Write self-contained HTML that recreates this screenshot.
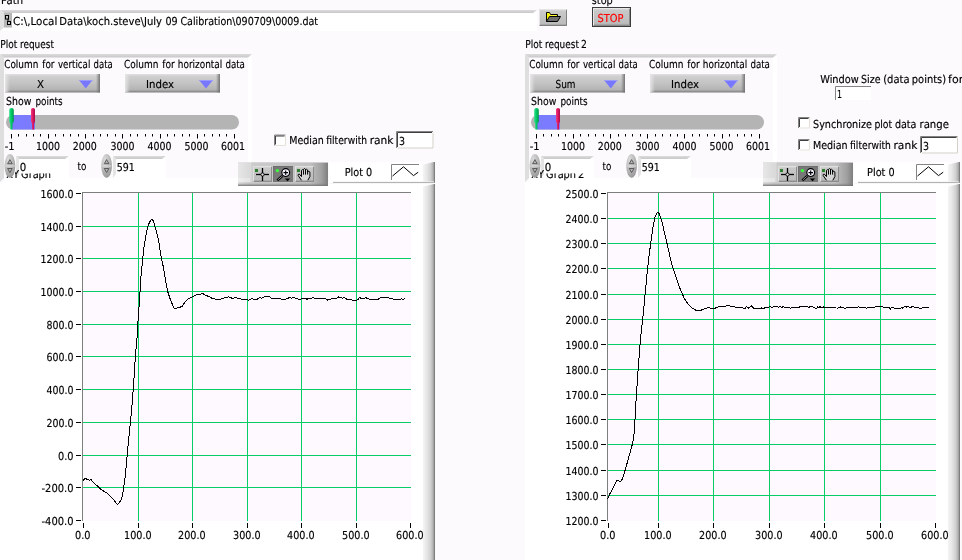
<!DOCTYPE html>
<html lang="en">
<head>
<meta charset="utf-8">
<title>XY Graph viewer</title>
<style>
html,body{margin:0;padding:0;background:#fdfafe;}
body{width:962px;height:560px;overflow:hidden;font-family:"DejaVu Sans Condensed", "Liberation Sans", sans-serif;font-size:11px;}
svg{display:block;position:absolute;left:0;top:0;will-change:transform;}
</style>
</head>
<body>
<svg width="962" height="560" viewBox="0 0 962 560" font-family='"DejaVu Sans Condensed", "Liberation Sans", sans-serif' font-size="11px" text-rendering="geometricPrecision">
<defs>
<linearGradient id="gRing" x1="0" y1="0" x2="0" y2="1">
 <stop offset="0" stop-color="#e2e2e2"/><stop offset="0.12" stop-color="#cfcfcf"/>
 <stop offset="0.5" stop-color="#c3c3c3"/><stop offset="0.85" stop-color="#b4b4b4"/>
 <stop offset="0.93" stop-color="#969696"/><stop offset="1" stop-color="#7c7c7c"/>
</linearGradient>
<linearGradient id="gRingL" x1="0" y1="0" x2="1" y2="0">
 <stop offset="0" stop-color="#e6e6e6" stop-opacity="0.95"/><stop offset="1" stop-color="#e6e6e6" stop-opacity="0"/>
</linearGradient>
<linearGradient id="gRingR" x1="0" y1="0" x2="1" y2="0">
 <stop offset="0" stop-color="#707070" stop-opacity="0"/><stop offset="1" stop-color="#707070" stop-opacity="0.95"/>
</linearGradient>
<linearGradient id="gEdge" x1="0" y1="0" x2="1" y2="0">
 <stop offset="0" stop-color="#ffffff"/><stop offset="0.09" stop-color="#fdfdfd"/><stop offset="0.1" stop-color="#f3f3f3"/><stop offset="0.35" stop-color="#e8e8e8"/><stop offset="0.65" stop-color="#d2d2d2"/>
 <stop offset="0.84" stop-color="#b4b4b4"/><stop offset="0.92" stop-color="#989898"/><stop offset="0.97" stop-color="#7a7a7a"/><stop offset="1" stop-color="#6e6e6e"/>
</linearGradient>
<linearGradient id="gPal" x1="0" y1="0" x2="1" y2="0">
 <stop offset="0" stop-color="#dedede"/><stop offset="0.12" stop-color="#cccccc"/>
 <stop offset="0.8" stop-color="#c0c0c0"/><stop offset="0.93" stop-color="#a0a0a0"/><stop offset="1" stop-color="#7e7e7e"/>
</linearGradient>
<linearGradient id="gPalB" x1="0" y1="0" x2="0" y2="1">
 <stop offset="0" stop-color="#808080" stop-opacity="0"/><stop offset="1" stop-color="#707070" stop-opacity="0.9"/>
</linearGradient>
<linearGradient id="gBtn" x1="0" y1="0" x2="0" y2="1">
 <stop offset="0" stop-color="#dcdcdc"/><stop offset="0.15" stop-color="#c8c8c8"/>
 <stop offset="0.85" stop-color="#bcbcbc"/><stop offset="1" stop-color="#8a8a8a"/>
</linearGradient>
<linearGradient id="gGreen" x1="0" y1="0" x2="1" y2="0">
 <stop offset="0" stop-color="#2fe08a"/><stop offset="0.5" stop-color="#00c864"/><stop offset="1" stop-color="#00964a"/>
</linearGradient>
<linearGradient id="gRed" x1="0" y1="0" x2="1" y2="0">
 <stop offset="0" stop-color="#f0407e"/><stop offset="0.5" stop-color="#dc1462"/><stop offset="1" stop-color="#a80c48"/>
</linearGradient>
<radialGradient id="gSpin" cx="0.35" cy="0.25" r="0.8">
 <stop offset="0" stop-color="#dcdcdc"/><stop offset="0.5" stop-color="#bcbcbc"/><stop offset="1" stop-color="#969696"/>
</radialGradient>
<linearGradient id="gTopB" x1="0" y1="0" x2="0" y2="1">
 <stop offset="0" stop-color="#dcdcdc"/><stop offset="1" stop-color="#c8c8c8"/>
</linearGradient>
</defs>
<rect x="0" y="0" width="962" height="560" fill="#fdfafe"/>
<text x="1.0" y="4.0" text-anchor="start" fill="#000" stroke="#000" stroke-width="0.15" textLength="22.0" lengthAdjust="spacingAndGlyphs">Path</text>
<text x="591.8" y="4.0" text-anchor="start" fill="#000" stroke="#000" stroke-width="0.15" textLength="21.0" lengthAdjust="spacingAndGlyphs">stop</text>
<g id="path-control">
<rect x="0" y="10" width="537" height="21" fill="#ffffff"/>
<polygon points="0,10 537,10 533,13 4,13" fill="url(#gTopB)"/>
<polygon points="0,10 4,13 4,27.5 0,31" fill="#e2e2e2"/>
<rect x="4" y="13" width="529" height="14.5" fill="#ffffff"/>
<rect x="4" y="13" width="8" height="14.5" fill="#b6b6b6"/>
<rect x="5.5" y="15.5" width="3" height="3.5" fill="#c8c8c8" stroke="#000" stroke-width="1"/>
<rect x="7.5" y="21.5" width="3" height="3" fill="#c8c8c8" stroke="#000" stroke-width="1"/>
<line x1="8" y1="19" x2="8" y2="21.5" stroke="#000" stroke-width="1"/>
<text y="25.0" fill="#000" stroke="#000" stroke-width="0.15"><tspan x="13.0" textLength="44.3" lengthAdjust="spacingAndGlyphs">C:\,Local</tspan> <tspan x="59.3" textLength="102.7" lengthAdjust="spacingAndGlyphs">Data\koch.steve\July</tspan> <tspan x="165.4" textLength="12.2" lengthAdjust="spacingAndGlyphs">09</tspan> <tspan x="180.4" textLength="137.7" lengthAdjust="spacingAndGlyphs">Calibration\090709\0009.dat</tspan></text>
</g>
<g id="browse-button">
<rect x="539" y="9" width="28" height="17" fill="url(#gBtn)"/>
<path d="M539.5,25.5 L566.5,25.5 L566.5,9.5" fill="none" stroke="#808080" stroke-width="1"/>
<path d="M539.5,25.5 L539.5,9.5 L566.5,9.5" fill="none" stroke="#e4e4e4" stroke-width="1"/>
<path d="M546.5,21.5 L546.5,12.5 L549.5,12.5 L550.5,14.5 L557.5,14.5 L557.5,16.5" fill="#f4f000" stroke="#000" stroke-width="1"/>
<path d="M546.5,21.5 L549.5,16.5 L560.5,16.5 L557.5,21.5 Z" fill="#6e6e6e" stroke="#000" stroke-width="1"/>
<path d="M547.5,13.5 L549,13.5 L550,15.5 L556.5,15.5" fill="none" stroke="#ffff30" stroke-width="1"/>
</g>
<g id="stop-button">
<rect x="592" y="7" width="39" height="20" fill="#3c3c3c"/>
<rect x="593" y="8" width="37" height="18" fill="url(#gBtn)"/>
<path d="M593.5,25.5 L629.5,25.5 L629.5,8.5" fill="none" stroke="#8a8a8a" stroke-width="1"/>
<path d="M593.5,25.5 L593.5,8.5 L629.5,8.5" fill="none" stroke="#e8e8e8" stroke-width="1"/>
<text x="597.5" y="22.0" text-anchor="start" fill="#ff0000" stroke="#ff0000" stroke-width="0.15" textLength="26.0" lengthAdjust="spacingAndGlyphs">STOP</text>
</g>
<g id="xy-graph">
<rect x="0" y="182" width="423" height="378" fill="#ffffff"/>
<rect x="422" y="184" width="13" height="376" fill="url(#gEdge)"/>
<polygon points="422,184 434,184 423,186.8 422,186.8" fill="#ffffff" opacity="0.85"/>
<rect x="83" y="193" width="328" height="328" fill="#fdf9fe"/>
<g stroke="#08cc66" stroke-width="1" shape-rendering="crispEdges">
<line x1="83" y1="226.5" x2="411" y2="226.5"/>
<line x1="83" y1="258.5" x2="411" y2="258.5"/>
<line x1="83" y1="291.5" x2="411" y2="291.5"/>
<line x1="83" y1="324.5" x2="411" y2="324.5"/>
<line x1="83" y1="356.5" x2="411" y2="356.5"/>
<line x1="83" y1="389.5" x2="411" y2="389.5"/>
<line x1="83" y1="422.5" x2="411" y2="422.5"/>
<line x1="83" y1="455.5" x2="411" y2="455.5"/>
<line x1="83" y1="487.5" x2="411" y2="487.5"/>
<line x1="138.5" y1="193" x2="138.5" y2="521"/>
<line x1="192.5" y1="193" x2="192.5" y2="521"/>
<line x1="247.5" y1="193" x2="247.5" y2="521"/>
<line x1="301.5" y1="193" x2="301.5" y2="521"/>
<line x1="356.5" y1="193" x2="356.5" y2="521"/>
</g>
<path d="M82.5,521 L82.5,192.5 L411,192.5" fill="none" stroke="#7c807c" stroke-width="1" shape-rendering="crispEdges"/>
<g stroke="#000" stroke-width="1" shape-rendering="crispEdges">
<line x1="76" y1="193.5" x2="81" y2="193.5"/>
<line x1="76" y1="226.5" x2="81" y2="226.5"/>
<line x1="76" y1="258.5" x2="81" y2="258.5"/>
<line x1="76" y1="291.5" x2="81" y2="291.5"/>
<line x1="76" y1="324.5" x2="81" y2="324.5"/>
<line x1="76" y1="356.5" x2="81" y2="356.5"/>
<line x1="76" y1="389.5" x2="81" y2="389.5"/>
<line x1="76" y1="422.5" x2="81" y2="422.5"/>
<line x1="76" y1="455.5" x2="81" y2="455.5"/>
<line x1="76" y1="487.5" x2="81" y2="487.5"/>
<line x1="76" y1="520.5" x2="81" y2="520.5"/>
<line x1="83.5" y1="523" x2="83.5" y2="528"/>
<line x1="138.5" y1="523" x2="138.5" y2="528"/>
<line x1="192.5" y1="523" x2="192.5" y2="528"/>
<line x1="247.5" y1="523" x2="247.5" y2="528"/>
<line x1="301.5" y1="523" x2="301.5" y2="528"/>
<line x1="356.5" y1="523" x2="356.5" y2="528"/>
<line x1="410.5" y1="523" x2="410.5" y2="528"/>
</g>
<text x="73.5" y="197.5" text-anchor="end" fill="#000" stroke="#000" stroke-width="0.15" textLength="33.0" lengthAdjust="spacingAndGlyphs">1600.0</text>
<text x="73.5" y="230.5" text-anchor="end" fill="#000" stroke="#000" stroke-width="0.15" textLength="33.0" lengthAdjust="spacingAndGlyphs">1400.0</text>
<text x="73.5" y="262.5" text-anchor="end" fill="#000" stroke="#000" stroke-width="0.15" textLength="33.0" lengthAdjust="spacingAndGlyphs">1200.0</text>
<text x="73.5" y="295.5" text-anchor="end" fill="#000" stroke="#000" stroke-width="0.15" textLength="33.0" lengthAdjust="spacingAndGlyphs">1000.0</text>
<text x="73.5" y="328.5" text-anchor="end" fill="#000" stroke="#000" stroke-width="0.15" textLength="27.0" lengthAdjust="spacingAndGlyphs">800.0</text>
<text x="73.5" y="360.5" text-anchor="end" fill="#000" stroke="#000" stroke-width="0.15" textLength="27.0" lengthAdjust="spacingAndGlyphs">600.0</text>
<text x="73.5" y="393.5" text-anchor="end" fill="#000" stroke="#000" stroke-width="0.15" textLength="27.0" lengthAdjust="spacingAndGlyphs">400.0</text>
<text x="73.5" y="426.5" text-anchor="end" fill="#000" stroke="#000" stroke-width="0.15" textLength="27.0" lengthAdjust="spacingAndGlyphs">200.0</text>
<text x="73.5" y="459.5" text-anchor="end" fill="#000" stroke="#000" stroke-width="0.15" textLength="15.5" lengthAdjust="spacingAndGlyphs">0.0</text>
<text x="73.5" y="491.5" text-anchor="end" fill="#000" stroke="#000" stroke-width="0.15" textLength="32.0" lengthAdjust="spacingAndGlyphs">-200.0</text>
<text x="73.5" y="524.5" text-anchor="end" fill="#000" stroke="#000" stroke-width="0.15" textLength="32.0" lengthAdjust="spacingAndGlyphs">-400.0</text>
<text x="82.8" y="538.5" text-anchor="middle" fill="#000" stroke="#000" stroke-width="0.15" textLength="15.5" lengthAdjust="spacingAndGlyphs">0.0</text>
<text x="137.8" y="538.5" text-anchor="middle" fill="#000" stroke="#000" stroke-width="0.15" textLength="27.5" lengthAdjust="spacingAndGlyphs">100.0</text>
<text x="191.8" y="538.5" text-anchor="middle" fill="#000" stroke="#000" stroke-width="0.15" textLength="27.5" lengthAdjust="spacingAndGlyphs">200.0</text>
<text x="246.8" y="538.5" text-anchor="middle" fill="#000" stroke="#000" stroke-width="0.15" textLength="27.5" lengthAdjust="spacingAndGlyphs">300.0</text>
<text x="300.8" y="538.5" text-anchor="middle" fill="#000" stroke="#000" stroke-width="0.15" textLength="27.5" lengthAdjust="spacingAndGlyphs">400.0</text>
<text x="355.8" y="538.5" text-anchor="middle" fill="#000" stroke="#000" stroke-width="0.15" textLength="27.5" lengthAdjust="spacingAndGlyphs">500.0</text>
<text x="409.8" y="538.5" text-anchor="middle" fill="#000" stroke="#000" stroke-width="0.15" textLength="27.5" lengthAdjust="spacingAndGlyphs">600.0</text>
<polyline points="83.0,480.3 85.4,478.4 87.5,479.7 89.6,480.3 91.1,479.7 93.3,482.4 97.1,485.7 100.3,488.9 103.6,491.0 107.8,493.6 112.1,498.0 115.3,501.7 117.5,504.9 119.4,502.5 120.7,500.6 122.8,494.2 123.9,485.7 125.4,474.9 127.1,455.7 128.8,438.5 130.5,421.4 132.5,400.0 134.0,378.0 135.5,355.0 137.0,338.0 138.1,319.9 139.6,298.5 141.1,275.0 142.8,257.8 144.1,246.0 146.1,234.3 148.2,225.3 150.3,220.8 152.1,219.3 153.6,221.4 155.3,227.8 157.4,235.3 158.9,242.8 161.0,255.7 163.2,266.4 165.3,279.2 167.5,291.0 170.7,300.6 174.3,308.8 176.0,308.2 178.2,307.7 180.0,307.3 182.5,306.0 185.2,301.7 188.9,298.5 191.0,297.6 193.2,296.4 195.5,295.2 197.5,294.2 200.0,294.4 202.8,293.6 205.0,295.0 207.1,295.9 209.5,296.6 212.4,298.5 215.0,299.0 217.8,300.0 220.0,299.3 221.0,298.9 222.1,298.9 223.2,298.7 224.3,297.9 225.4,297.4 226.5,297.0 227.6,297.0 228.7,296.9 229.8,297.5 230.9,297.7 232.0,298.3 233.1,298.6 234.2,297.9 235.3,297.9 236.4,297.9 237.5,298.4 238.6,298.7 239.7,298.4 240.8,299.0 241.9,299.0 243.0,299.1 244.1,299.6 245.2,299.3 246.3,299.5 247.4,299.9 248.5,300.2 249.6,299.7 250.7,299.1 251.8,298.7 252.9,299.1 254.0,299.5 255.1,299.3 256.2,299.0 257.3,299.1 258.4,298.6 259.5,297.8 260.6,297.9 261.7,298.2 262.8,297.8 263.9,297.1 265.0,296.8 266.1,296.5 267.2,296.3 268.3,296.8 269.4,296.8 270.5,297.5 271.6,298.2 272.7,298.1 273.8,298.3 274.9,299.0 276.0,298.6 277.1,298.4 278.2,298.8 279.3,298.4 280.4,298.6 281.5,299.2 282.6,299.0 283.7,299.0 284.8,299.2 285.9,299.2 287.0,298.6 288.1,298.1 289.2,297.8 290.3,297.9 291.4,298.1 292.5,297.8 293.6,297.9 294.7,297.9 295.8,298.6 296.9,298.6 298.0,298.8 299.1,299.5 300.2,299.5 301.3,298.8 302.4,298.6 303.5,299.0 304.6,298.2 305.7,298.3 306.8,299.4 307.9,298.6 309.0,298.5 310.1,298.0 311.2,298.0 312.3,298.0 313.4,297.4 314.5,298.1 315.6,298.3 316.7,298.5 317.8,298.4 318.9,299.0 320.0,298.1 321.1,298.5 322.2,299.0 323.3,298.8 324.4,298.5 325.5,298.9 326.6,299.1 327.7,300.4 328.8,299.3 329.9,299.2 331.0,299.1 332.1,298.7 333.2,298.7 334.3,298.7 335.4,298.1 336.5,298.3 337.6,297.5 338.7,296.9 339.8,297.3 340.9,297.8 342.0,298.0 343.1,298.1 344.2,297.7 345.3,298.3 346.4,299.0 347.5,299.5 348.6,299.2 349.7,299.2 350.8,299.7 351.9,299.9 353.0,300.6 354.1,300.2 355.2,300.4 356.3,300.4 357.4,299.9 358.5,299.0 359.6,297.4 360.7,298.3 361.8,298.7 362.9,298.4 364.0,298.5 365.1,297.9 366.2,297.8 367.3,298.5 368.4,298.8 369.5,299.4 370.6,299.5 371.7,299.5 372.8,299.5 373.9,299.3 375.0,299.4 376.1,299.6 377.2,299.2 378.3,299.3 379.4,298.4 380.5,297.8 381.6,297.4 382.7,297.8 383.8,297.3 384.9,297.5 386.0,297.8 387.1,297.5 388.2,297.6 389.3,298.4 390.4,298.0 391.5,298.3 392.6,298.2 393.7,299.9 394.8,300.0 395.9,298.9 397.0,299.6 398.1,299.9 399.2,300.1 400.3,299.4 401.4,298.8 402.5,299.1 403.6,299.1 404.7,298.7" fill="none" stroke="#000" stroke-width="1" stroke-linejoin="round" shape-rendering="crispEdges"/>
</g>
<g id="xy-graph-2">
<rect x="525" y="182" width="423" height="378" fill="#ffffff"/>
<rect x="947" y="184" width="13" height="376" fill="url(#gEdge)"/>
<polygon points="947,184 959,184 948,186.8 947,186.8" fill="#ffffff" opacity="0.85"/>
<rect x="608" y="193" width="328" height="328" fill="#fdf9fe"/>
<g stroke="#08cc66" stroke-width="1" shape-rendering="crispEdges">
<line x1="608" y1="218.5" x2="936" y2="218.5"/>
<line x1="608" y1="243.5" x2="936" y2="243.5"/>
<line x1="608" y1="268.5" x2="936" y2="268.5"/>
<line x1="608" y1="294.5" x2="936" y2="294.5"/>
<line x1="608" y1="319.5" x2="936" y2="319.5"/>
<line x1="608" y1="344.5" x2="936" y2="344.5"/>
<line x1="608" y1="369.5" x2="936" y2="369.5"/>
<line x1="608" y1="394.5" x2="936" y2="394.5"/>
<line x1="608" y1="419.5" x2="936" y2="419.5"/>
<line x1="608" y1="444.5" x2="936" y2="444.5"/>
<line x1="608" y1="470.5" x2="936" y2="470.5"/>
<line x1="608" y1="495.5" x2="936" y2="495.5"/>
<line x1="658.5" y1="193" x2="658.5" y2="521"/>
<line x1="713.5" y1="193" x2="713.5" y2="521"/>
<line x1="769.5" y1="193" x2="769.5" y2="521"/>
<line x1="824.5" y1="193" x2="824.5" y2="521"/>
<line x1="880.5" y1="193" x2="880.5" y2="521"/>
</g>
<path d="M607.5,521 L607.5,192.5 L936,192.5" fill="none" stroke="#7c807c" stroke-width="1" shape-rendering="crispEdges"/>
<g stroke="#000" stroke-width="1" shape-rendering="crispEdges">
<line x1="601" y1="193.5" x2="606" y2="193.5"/>
<line x1="601" y1="218.5" x2="606" y2="218.5"/>
<line x1="601" y1="243.5" x2="606" y2="243.5"/>
<line x1="601" y1="268.5" x2="606" y2="268.5"/>
<line x1="601" y1="294.5" x2="606" y2="294.5"/>
<line x1="601" y1="319.5" x2="606" y2="319.5"/>
<line x1="601" y1="344.5" x2="606" y2="344.5"/>
<line x1="601" y1="369.5" x2="606" y2="369.5"/>
<line x1="601" y1="394.5" x2="606" y2="394.5"/>
<line x1="601" y1="419.5" x2="606" y2="419.5"/>
<line x1="601" y1="444.5" x2="606" y2="444.5"/>
<line x1="601" y1="470.5" x2="606" y2="470.5"/>
<line x1="601" y1="495.5" x2="606" y2="495.5"/>
<line x1="601" y1="520.5" x2="606" y2="520.5"/>
<line x1="608.5" y1="523" x2="608.5" y2="528"/>
<line x1="658.5" y1="523" x2="658.5" y2="528"/>
<line x1="713.5" y1="523" x2="713.5" y2="528"/>
<line x1="769.5" y1="523" x2="769.5" y2="528"/>
<line x1="824.5" y1="523" x2="824.5" y2="528"/>
<line x1="880.5" y1="523" x2="880.5" y2="528"/>
<line x1="935.5" y1="523" x2="935.5" y2="528"/>
</g>
<text x="598.5" y="197.5" text-anchor="end" fill="#000" stroke="#000" stroke-width="0.15" textLength="33.0" lengthAdjust="spacingAndGlyphs">2500.0</text>
<text x="598.5" y="222.5" text-anchor="end" fill="#000" stroke="#000" stroke-width="0.15" textLength="33.0" lengthAdjust="spacingAndGlyphs">2400.0</text>
<text x="598.5" y="247.5" text-anchor="end" fill="#000" stroke="#000" stroke-width="0.15" textLength="33.0" lengthAdjust="spacingAndGlyphs">2300.0</text>
<text x="598.5" y="272.5" text-anchor="end" fill="#000" stroke="#000" stroke-width="0.15" textLength="33.0" lengthAdjust="spacingAndGlyphs">2200.0</text>
<text x="598.5" y="298.5" text-anchor="end" fill="#000" stroke="#000" stroke-width="0.15" textLength="33.0" lengthAdjust="spacingAndGlyphs">2100.0</text>
<text x="598.5" y="323.5" text-anchor="end" fill="#000" stroke="#000" stroke-width="0.15" textLength="33.0" lengthAdjust="spacingAndGlyphs">2000.0</text>
<text x="598.5" y="348.5" text-anchor="end" fill="#000" stroke="#000" stroke-width="0.15" textLength="33.0" lengthAdjust="spacingAndGlyphs">1900.0</text>
<text x="598.5" y="373.5" text-anchor="end" fill="#000" stroke="#000" stroke-width="0.15" textLength="33.0" lengthAdjust="spacingAndGlyphs">1800.0</text>
<text x="598.5" y="398.5" text-anchor="end" fill="#000" stroke="#000" stroke-width="0.15" textLength="33.0" lengthAdjust="spacingAndGlyphs">1700.0</text>
<text x="598.5" y="423.5" text-anchor="end" fill="#000" stroke="#000" stroke-width="0.15" textLength="33.0" lengthAdjust="spacingAndGlyphs">1600.0</text>
<text x="598.5" y="448.5" text-anchor="end" fill="#000" stroke="#000" stroke-width="0.15" textLength="33.0" lengthAdjust="spacingAndGlyphs">1500.0</text>
<text x="598.5" y="474.5" text-anchor="end" fill="#000" stroke="#000" stroke-width="0.15" textLength="33.0" lengthAdjust="spacingAndGlyphs">1400.0</text>
<text x="598.5" y="499.5" text-anchor="end" fill="#000" stroke="#000" stroke-width="0.15" textLength="33.0" lengthAdjust="spacingAndGlyphs">1300.0</text>
<text x="598.5" y="524.5" text-anchor="end" fill="#000" stroke="#000" stroke-width="0.15" textLength="33.0" lengthAdjust="spacingAndGlyphs">1200.0</text>
<text x="607.8" y="538.5" text-anchor="middle" fill="#000" stroke="#000" stroke-width="0.15" textLength="15.5" lengthAdjust="spacingAndGlyphs">0.0</text>
<text x="657.8" y="538.5" text-anchor="middle" fill="#000" stroke="#000" stroke-width="0.15" textLength="27.5" lengthAdjust="spacingAndGlyphs">100.0</text>
<text x="712.8" y="538.5" text-anchor="middle" fill="#000" stroke="#000" stroke-width="0.15" textLength="27.5" lengthAdjust="spacingAndGlyphs">200.0</text>
<text x="768.8" y="538.5" text-anchor="middle" fill="#000" stroke="#000" stroke-width="0.15" textLength="27.5" lengthAdjust="spacingAndGlyphs">300.0</text>
<text x="823.8" y="538.5" text-anchor="middle" fill="#000" stroke="#000" stroke-width="0.15" textLength="27.5" lengthAdjust="spacingAndGlyphs">400.0</text>
<text x="879.8" y="538.5" text-anchor="middle" fill="#000" stroke="#000" stroke-width="0.15" textLength="27.5" lengthAdjust="spacingAndGlyphs">500.0</text>
<text x="934.8" y="538.5" text-anchor="middle" fill="#000" stroke="#000" stroke-width="0.15" textLength="27.5" lengthAdjust="spacingAndGlyphs">600.0</text>
<polyline points="607.7,499.2 609.6,494.3 611.0,491.8 612.9,488.6 614.8,484.5 616.7,480.8 618.2,480.6 619.9,481.5 621.3,480.6 622.5,478.9 625.1,470.2 628.3,459.0 631.5,447.7 633.4,439.7 634.7,426.8 635.4,410.7 636.7,391.4 637.9,372.2 639.2,356.0 640.5,338.0 642.5,321.4 644.7,298.6 647.1,272.9 649.4,252.9 651.4,238.6 653.2,225.7 655.0,217.1 656.3,214.0 657.6,212.1 658.9,213.2 660.0,215.7 662.3,222.9 665.1,235.7 668.6,250.0 671.4,262.9 675.7,275.7 680.0,288.6 684.3,298.6 688.6,304.9 692.9,308.6 696.0,310.2 698.6,310.9 700.8,310.4 702.9,309.4 705.5,308.3 708.6,307.7 711.0,308.4 714.3,308.6 717.0,307.2 720.0,306.6 724.0,306.3 728.6,305.7 731.0,306.4 734.3,306.6 735.2,307.3 736.3,308.0 737.4,307.9 738.5,307.4 739.6,307.8 740.7,307.3 741.8,307.1 742.9,307.8 744.0,308.5 745.1,308.4 746.2,306.5 747.3,307.1 748.4,308.3 749.5,307.1 750.6,307.0 751.7,305.9 752.8,307.5 753.9,308.4 755.0,308.7 756.1,308.2 757.2,308.0 758.3,308.4 759.4,308.6 760.5,308.9 761.6,307.7 762.7,308.2 763.8,308.6 764.9,307.5 766.0,307.9 767.1,307.1 768.2,307.8 769.3,307.0 770.4,306.5 771.5,307.1 772.6,307.1 773.7,306.7 774.8,306.4 775.9,306.2 777.0,306.3 778.1,307.3 779.2,307.0 780.3,306.7 781.4,307.5 782.5,307.0 783.6,306.9 784.7,307.7 785.8,307.5 786.9,307.2 788.0,307.2 789.1,307.3 790.2,308.1 791.3,308.0 792.4,307.4 793.5,308.0 794.6,307.5 795.7,307.8 796.8,307.2 797.9,307.7 799.0,307.3 800.1,306.5 801.2,306.3 802.3,306.2 803.4,306.6 804.5,306.3 805.6,306.1 806.7,306.6 807.8,306.9 808.9,307.6 810.0,306.7 811.1,307.0 812.2,306.8 813.3,307.3 814.4,307.4 815.5,308.3 816.6,308.5 817.7,306.7 818.8,307.9 819.9,306.4 821.0,307.6 822.1,307.4 823.2,306.9 824.3,307.5 825.4,307.7 826.5,308.0 827.6,307.5 828.7,307.9 829.8,307.5 830.9,307.9 832.0,307.7 833.1,307.6 834.2,307.0 835.3,307.8 836.4,308.0 837.5,308.1 838.6,307.9 839.7,307.3 840.8,306.9 841.9,307.3 843.0,307.8 844.1,308.0 845.2,308.8 846.3,307.3 847.4,307.6 848.5,307.4 849.6,307.5 850.7,307.4 851.8,307.6 852.9,307.8 854.0,307.2 855.1,307.7 856.2,307.0 857.3,307.6 858.4,306.8 859.5,307.3 860.6,307.1 861.7,307.4 862.8,307.2 863.9,307.5 865.0,307.6 866.1,308.0 867.2,308.0 868.3,307.6 869.4,307.9 870.5,308.0 871.6,307.4 872.7,307.1 873.8,307.6 874.9,306.9 876.0,307.0 877.1,306.9 878.2,306.5 879.3,306.4 880.4,307.0 881.5,306.3 882.6,306.9 883.7,307.4 884.8,307.8 885.9,307.9 887.0,307.2 888.1,307.8 889.2,307.5 890.3,309.2 891.4,307.8 892.5,307.4 893.6,307.9 894.7,308.1 895.8,308.5 896.9,308.8 898.0,308.8 899.1,308.9 900.2,308.3 901.3,307.9 902.4,308.1 903.5,307.2 904.6,306.7 905.7,306.5 906.8,307.2 907.9,306.7 909.0,307.1 910.1,307.3 911.2,307.2 912.3,306.5 913.4,306.7 914.5,307.1 915.6,307.1 916.7,307.3 917.8,307.3 918.9,308.0 920.0,308.4 921.1,308.2 922.2,307.8 923.3,307.9 924.4,307.3 925.5,307.5 926.6,308.0 927.7,307.9 928.8,307.2" fill="none" stroke="#000" stroke-width="1" stroke-linejoin="round" shape-rendering="crispEdges"/>
</g>
<g id="plot-request">
<text y="47.5" fill="#000" stroke="#000" stroke-width="0.15"><tspan x="0.2" textLength="17.0" lengthAdjust="spacingAndGlyphs">Plot</tspan> <tspan x="20.0" textLength="33.9" lengthAdjust="spacingAndGlyphs">request</tspan></text>
<polygon points="0,54 252,54 248,57.5 4,57.5" fill="url(#gTopB)"/>
<polygon points="0,54 4,57.5 4,178 0,182" fill="#dedede"/>
<rect x="248" y="57.5" width="4" height="124.5" fill="#ffffff"/>
<rect x="4" y="178" width="248" height="4" fill="#ffffff"/>
<text y="67.5" fill="#000" stroke="#000" stroke-width="0.15"><tspan x="4.2" textLength="34.1" lengthAdjust="spacingAndGlyphs">Column</tspan> <tspan x="42.3" textLength="12.2" lengthAdjust="spacingAndGlyphs">for</tspan> <tspan x="58.0" textLength="32.3" lengthAdjust="spacingAndGlyphs">vertical</tspan> <tspan x="93.6" textLength="19.1" lengthAdjust="spacingAndGlyphs">data</tspan></text>
<text y="67.5" fill="#000" stroke="#000" stroke-width="0.15"><tspan x="124.0" textLength="34.4" lengthAdjust="spacingAndGlyphs">Column</tspan> <tspan x="162.2" textLength="12.5" lengthAdjust="spacingAndGlyphs">for</tspan> <tspan x="177.8" textLength="44.5" lengthAdjust="spacingAndGlyphs">horizontal</tspan> <tspan x="225.4" textLength="19.5" lengthAdjust="spacingAndGlyphs">data</tspan></text>
<rect x="5" y="74" width="95" height="18.5" fill="url(#gRing)"/>
<rect x="5" y="74" width="5" height="18.5" fill="url(#gRingL)"/>
<rect x="96" y="74" width="4" height="18.5" fill="url(#gRingR)"/>
<polygon points="79,80 92.5,80 85.75,88.5" fill="#7878ff"/>
<line x1="79" y1="80.5" x2="92.5" y2="80.5" stroke="#9a9aff" stroke-width="1"/>
<text x="40.5" y="88.0" text-anchor="middle" fill="#000" stroke="#000" stroke-width="0.15" textLength="7.0" lengthAdjust="spacingAndGlyphs">X</text>
<rect x="125" y="74" width="95" height="18.5" fill="url(#gRing)"/>
<rect x="125" y="74" width="5" height="18.5" fill="url(#gRingL)"/>
<rect x="216" y="74" width="4" height="18.5" fill="url(#gRingR)"/>
<polygon points="199,80 213,80 206.0,88.5" fill="#7878ff"/>
<line x1="199" y1="80.5" x2="213" y2="80.5" stroke="#9a9aff" stroke-width="1"/>
<text x="160.0" y="88.0" text-anchor="middle" fill="#000" stroke="#000" stroke-width="0.15" textLength="28.0" lengthAdjust="spacingAndGlyphs">Index</text>
<text y="104.5" fill="#000" stroke="#000" stroke-width="0.15"><tspan x="6.1" textLength="25.3" lengthAdjust="spacingAndGlyphs">Show</tspan> <tspan x="35.5" textLength="27.2" lengthAdjust="spacingAndGlyphs">points</tspan></text>
<rect x="6" y="115" width="233" height="14.5" rx="7.2" ry="7.2" fill="#b4b4b4"/>
<rect x="12" y="115" width="23" height="14.5" fill="#7b7bff"/>
<path d="M9.2,110 Q9.2,108 11.5,108 Q13.8,108 13.8,110 L13.8,122 L12.6,123 L12.4,129.5 L10.4,129.5 L10.2,123 L9.2,122 Z" fill="url(#gGreen)"/>
<path d="M31,109.5 Q31,108 33,108 Q35,108 35,109.5 L35,122 L34.2,123 L34,129.5 L32.2,129.5 L32,123 L31,122 Z" fill="url(#gRed)"/>
<line x1="11.5" y1="134" x2="11.5" y2="138.5" stroke="#000" stroke-width="1"/>
<line x1="18.5" y1="134" x2="18.5" y2="136.5" stroke="#000" stroke-width="1"/>
<line x1="26.5" y1="134" x2="26.5" y2="136.5" stroke="#000" stroke-width="1"/>
<line x1="33.5" y1="134" x2="33.5" y2="136.5" stroke="#000" stroke-width="1"/>
<line x1="40.5" y1="134" x2="40.5" y2="136.5" stroke="#000" stroke-width="1"/>
<line x1="48.5" y1="134" x2="48.5" y2="138.5" stroke="#000" stroke-width="1"/>
<line x1="55.5" y1="134" x2="55.5" y2="136.5" stroke="#000" stroke-width="1"/>
<line x1="63.5" y1="134" x2="63.5" y2="136.5" stroke="#000" stroke-width="1"/>
<line x1="70.5" y1="134" x2="70.5" y2="136.5" stroke="#000" stroke-width="1"/>
<line x1="78.5" y1="134" x2="78.5" y2="136.5" stroke="#000" stroke-width="1"/>
<line x1="85.5" y1="134" x2="85.5" y2="138.5" stroke="#000" stroke-width="1"/>
<line x1="93.5" y1="134" x2="93.5" y2="136.5" stroke="#000" stroke-width="1"/>
<line x1="100.5" y1="134" x2="100.5" y2="136.5" stroke="#000" stroke-width="1"/>
<line x1="107.5" y1="134" x2="107.5" y2="136.5" stroke="#000" stroke-width="1"/>
<line x1="115.5" y1="134" x2="115.5" y2="136.5" stroke="#000" stroke-width="1"/>
<line x1="122.5" y1="134" x2="122.5" y2="138.5" stroke="#000" stroke-width="1"/>
<line x1="130.5" y1="134" x2="130.5" y2="136.5" stroke="#000" stroke-width="1"/>
<line x1="137.5" y1="134" x2="137.5" y2="136.5" stroke="#000" stroke-width="1"/>
<line x1="145.5" y1="134" x2="145.5" y2="136.5" stroke="#000" stroke-width="1"/>
<line x1="152.5" y1="134" x2="152.5" y2="136.5" stroke="#000" stroke-width="1"/>
<line x1="160.5" y1="134" x2="160.5" y2="138.5" stroke="#000" stroke-width="1"/>
<line x1="167.5" y1="134" x2="167.5" y2="136.5" stroke="#000" stroke-width="1"/>
<line x1="174.5" y1="134" x2="174.5" y2="136.5" stroke="#000" stroke-width="1"/>
<line x1="182.5" y1="134" x2="182.5" y2="136.5" stroke="#000" stroke-width="1"/>
<line x1="189.5" y1="134" x2="189.5" y2="136.5" stroke="#000" stroke-width="1"/>
<line x1="197.5" y1="134" x2="197.5" y2="138.5" stroke="#000" stroke-width="1"/>
<line x1="204.5" y1="134" x2="204.5" y2="136.5" stroke="#000" stroke-width="1"/>
<line x1="212.5" y1="134" x2="212.5" y2="136.5" stroke="#000" stroke-width="1"/>
<line x1="219.5" y1="134" x2="219.5" y2="136.5" stroke="#000" stroke-width="1"/>
<line x1="226.5" y1="134" x2="226.5" y2="136.5" stroke="#000" stroke-width="1"/>
<line x1="234.5" y1="134" x2="234.5" y2="138.5" stroke="#000" stroke-width="1"/>
<text x="14.5" y="149.8" text-anchor="end" fill="#000" stroke="#000" stroke-width="0.15">-1</text>
<text x="47.9" y="149.8" text-anchor="middle" fill="#000" stroke="#000" stroke-width="0.15" textLength="24.0" lengthAdjust="spacingAndGlyphs">1000</text>
<text x="84.7" y="149.8" text-anchor="middle" fill="#000" stroke="#000" stroke-width="0.15" textLength="24.0" lengthAdjust="spacingAndGlyphs">2000</text>
<text x="122.5" y="149.8" text-anchor="middle" fill="#000" stroke="#000" stroke-width="0.15" textLength="24.0" lengthAdjust="spacingAndGlyphs">3000</text>
<text x="159.6" y="149.8" text-anchor="middle" fill="#000" stroke="#000" stroke-width="0.15" textLength="24.0" lengthAdjust="spacingAndGlyphs">4000</text>
<text x="196.4" y="149.8" text-anchor="middle" fill="#000" stroke="#000" stroke-width="0.15" textLength="24.0" lengthAdjust="spacingAndGlyphs">5000</text>
<text x="233.0" y="149.8" text-anchor="middle" fill="#000" stroke="#000" stroke-width="0.15" textLength="24.0" lengthAdjust="spacingAndGlyphs">6001</text>
<rect x="16" y="156" width="53" height="22" fill="#ffffff"/>
<polygon points="16,156 69,156 65,159 19,159" fill="url(#gTopB)"/>
<polygon points="16,156 19,159 19,174 16,178" fill="#e4e4e4"/>
<rect x="19" y="159" width="46" height="14.5" fill="#ffffff"/>
<text x="19.8" y="170.7" text-anchor="start" fill="#000" stroke="#000" stroke-width="0.15" textLength="6.5" lengthAdjust="spacingAndGlyphs">0</text>
<text x="77.5" y="170.0" text-anchor="start" fill="#000" stroke="#000" stroke-width="0.15" textLength="8.8" lengthAdjust="spacingAndGlyphs">to</text>
<rect x="113" y="156" width="53" height="22" fill="#ffffff"/>
<polygon points="113,156 166,156 162,159 116,159" fill="url(#gTopB)"/>
<polygon points="113,156 116,159 116,174 113,178" fill="#e4e4e4"/>
<rect x="116" y="159" width="46" height="14.5" fill="#ffffff"/>
<text x="116.8" y="170.7" text-anchor="start" fill="#000" stroke="#000" stroke-width="0.15" textLength="18.0" lengthAdjust="spacingAndGlyphs">591</text>
<clipPath id="clipG0"><rect x="15" y="169.5" width="4" height="13"/><rect x="19" y="173.6" width="110" height="9"/><rect x="0" y="174" width="15" height="9"/></clipPath>
<g clip-path="url(#clipG0)">
<text y="178.0" fill="#000" stroke="#000" stroke-width="0.15"><tspan x="6.2" textLength="12.8" lengthAdjust="spacingAndGlyphs">XY</tspan> <tspan x="21.1" textLength="29.9" lengthAdjust="spacingAndGlyphs">Graph</tspan></text>
</g>
<ellipse cx="9.9" cy="165.8" rx="5.4" ry="11.9" fill="url(#gSpin)"/>
<line x1="4.9" y1="166" x2="14.9" y2="166" stroke="#dcdcdc" stroke-width="1"/>
<polygon points="7.6000000000000005,163.7 12.2,163.7 9.9,159.6" fill="#b4b4b4" stroke="#505050" stroke-width="0.9"/>
<polygon points="7.6000000000000005,168.5 12.2,168.5 9.9,172.6" fill="#b4b4b4" stroke="#505050" stroke-width="0.9"/>
<ellipse cx="106.60000000000001" cy="165.8" rx="5.4" ry="11.9" fill="url(#gSpin)"/>
<line x1="101.60000000000001" y1="166" x2="111.60000000000001" y2="166" stroke="#dcdcdc" stroke-width="1"/>
<polygon points="104.30000000000001,163.7 108.9,163.7 106.60000000000001,159.6" fill="#b4b4b4" stroke="#505050" stroke-width="0.9"/>
<polygon points="104.30000000000001,168.5 108.9,168.5 106.60000000000001,172.6" fill="#b4b4b4" stroke="#505050" stroke-width="0.9"/>
</g>
<g id="plot-request-2">
<text y="47.5" fill="#000" stroke="#000" stroke-width="0.15"><tspan x="525.2" textLength="17.0" lengthAdjust="spacingAndGlyphs">Plot</tspan> <tspan x="545.0" textLength="33.9" lengthAdjust="spacingAndGlyphs">request</tspan> <tspan x="580.9" textLength="5.9" lengthAdjust="spacingAndGlyphs">2</tspan></text>
<polygon points="525,54 777,54 773,57.5 529,57.5" fill="url(#gTopB)"/>
<polygon points="525,54 529,57.5 529,178 525,182" fill="#dedede"/>
<rect x="773" y="57.5" width="4" height="124.5" fill="#ffffff"/>
<rect x="529" y="178" width="248" height="4" fill="#ffffff"/>
<text y="67.5" fill="#000" stroke="#000" stroke-width="0.15"><tspan x="529.2" textLength="34.1" lengthAdjust="spacingAndGlyphs">Column</tspan> <tspan x="567.3" textLength="12.2" lengthAdjust="spacingAndGlyphs">for</tspan> <tspan x="583.0" textLength="32.3" lengthAdjust="spacingAndGlyphs">vertical</tspan> <tspan x="618.6" textLength="19.1" lengthAdjust="spacingAndGlyphs">data</tspan></text>
<text y="67.5" fill="#000" stroke="#000" stroke-width="0.15"><tspan x="649.0" textLength="34.4" lengthAdjust="spacingAndGlyphs">Column</tspan> <tspan x="687.2" textLength="12.5" lengthAdjust="spacingAndGlyphs">for</tspan> <tspan x="702.8" textLength="44.5" lengthAdjust="spacingAndGlyphs">horizontal</tspan> <tspan x="750.4" textLength="19.5" lengthAdjust="spacingAndGlyphs">data</tspan></text>
<rect x="530" y="74" width="95" height="18.5" fill="url(#gRing)"/>
<rect x="530" y="74" width="5" height="18.5" fill="url(#gRingL)"/>
<rect x="621" y="74" width="4" height="18.5" fill="url(#gRingR)"/>
<polygon points="604,80 617.5,80 610.75,88.5" fill="#7878ff"/>
<line x1="604" y1="80.5" x2="617.5" y2="80.5" stroke="#9a9aff" stroke-width="1"/>
<text x="565.5" y="88.0" text-anchor="middle" fill="#000" stroke="#000" stroke-width="0.15" textLength="20.0" lengthAdjust="spacingAndGlyphs">Sum</text>
<rect x="650" y="74" width="95" height="18.5" fill="url(#gRing)"/>
<rect x="650" y="74" width="5" height="18.5" fill="url(#gRingL)"/>
<rect x="741" y="74" width="4" height="18.5" fill="url(#gRingR)"/>
<polygon points="724,80 738,80 731.0,88.5" fill="#7878ff"/>
<line x1="724" y1="80.5" x2="738" y2="80.5" stroke="#9a9aff" stroke-width="1"/>
<text x="685.0" y="88.0" text-anchor="middle" fill="#000" stroke="#000" stroke-width="0.15" textLength="28.0" lengthAdjust="spacingAndGlyphs">Index</text>
<text y="104.5" fill="#000" stroke="#000" stroke-width="0.15"><tspan x="531.1" textLength="25.3" lengthAdjust="spacingAndGlyphs">Show</tspan> <tspan x="560.5" textLength="27.2" lengthAdjust="spacingAndGlyphs">points</tspan></text>
<rect x="531" y="115" width="233" height="14.5" rx="7.2" ry="7.2" fill="#b4b4b4"/>
<rect x="537" y="115" width="23" height="14.5" fill="#7b7bff"/>
<path d="M534.2,110 Q534.2,108 536.5,108 Q538.8,108 538.8,110 L538.8,122 L537.6,123 L537.4,129.5 L535.4,129.5 L535.2,123 L534.2,122 Z" fill="url(#gGreen)"/>
<path d="M556,109.5 Q556,108 558,108 Q560,108 560,109.5 L560,122 L559.2,123 L559,129.5 L557.2,129.5 L557,123 L556,122 Z" fill="url(#gRed)"/>
<line x1="536.5" y1="134" x2="536.5" y2="138.5" stroke="#000" stroke-width="1"/>
<line x1="543.5" y1="134" x2="543.5" y2="136.5" stroke="#000" stroke-width="1"/>
<line x1="551.5" y1="134" x2="551.5" y2="136.5" stroke="#000" stroke-width="1"/>
<line x1="558.5" y1="134" x2="558.5" y2="136.5" stroke="#000" stroke-width="1"/>
<line x1="565.5" y1="134" x2="565.5" y2="136.5" stroke="#000" stroke-width="1"/>
<line x1="573.5" y1="134" x2="573.5" y2="138.5" stroke="#000" stroke-width="1"/>
<line x1="580.5" y1="134" x2="580.5" y2="136.5" stroke="#000" stroke-width="1"/>
<line x1="588.5" y1="134" x2="588.5" y2="136.5" stroke="#000" stroke-width="1"/>
<line x1="595.5" y1="134" x2="595.5" y2="136.5" stroke="#000" stroke-width="1"/>
<line x1="603.5" y1="134" x2="603.5" y2="136.5" stroke="#000" stroke-width="1"/>
<line x1="610.5" y1="134" x2="610.5" y2="138.5" stroke="#000" stroke-width="1"/>
<line x1="618.5" y1="134" x2="618.5" y2="136.5" stroke="#000" stroke-width="1"/>
<line x1="625.5" y1="134" x2="625.5" y2="136.5" stroke="#000" stroke-width="1"/>
<line x1="632.5" y1="134" x2="632.5" y2="136.5" stroke="#000" stroke-width="1"/>
<line x1="640.5" y1="134" x2="640.5" y2="136.5" stroke="#000" stroke-width="1"/>
<line x1="647.5" y1="134" x2="647.5" y2="138.5" stroke="#000" stroke-width="1"/>
<line x1="655.5" y1="134" x2="655.5" y2="136.5" stroke="#000" stroke-width="1"/>
<line x1="662.5" y1="134" x2="662.5" y2="136.5" stroke="#000" stroke-width="1"/>
<line x1="670.5" y1="134" x2="670.5" y2="136.5" stroke="#000" stroke-width="1"/>
<line x1="677.5" y1="134" x2="677.5" y2="136.5" stroke="#000" stroke-width="1"/>
<line x1="684.5" y1="134" x2="684.5" y2="138.5" stroke="#000" stroke-width="1"/>
<line x1="692.5" y1="134" x2="692.5" y2="136.5" stroke="#000" stroke-width="1"/>
<line x1="699.5" y1="134" x2="699.5" y2="136.5" stroke="#000" stroke-width="1"/>
<line x1="707.5" y1="134" x2="707.5" y2="136.5" stroke="#000" stroke-width="1"/>
<line x1="714.5" y1="134" x2="714.5" y2="136.5" stroke="#000" stroke-width="1"/>
<line x1="722.5" y1="134" x2="722.5" y2="138.5" stroke="#000" stroke-width="1"/>
<line x1="729.5" y1="134" x2="729.5" y2="136.5" stroke="#000" stroke-width="1"/>
<line x1="737.5" y1="134" x2="737.5" y2="136.5" stroke="#000" stroke-width="1"/>
<line x1="744.5" y1="134" x2="744.5" y2="136.5" stroke="#000" stroke-width="1"/>
<line x1="751.5" y1="134" x2="751.5" y2="136.5" stroke="#000" stroke-width="1"/>
<line x1="759.5" y1="134" x2="759.5" y2="138.5" stroke="#000" stroke-width="1"/>
<text x="539.5" y="149.8" text-anchor="end" fill="#000" stroke="#000" stroke-width="0.15">-1</text>
<text x="572.9" y="149.8" text-anchor="middle" fill="#000" stroke="#000" stroke-width="0.15" textLength="24.0" lengthAdjust="spacingAndGlyphs">1000</text>
<text x="609.7" y="149.8" text-anchor="middle" fill="#000" stroke="#000" stroke-width="0.15" textLength="24.0" lengthAdjust="spacingAndGlyphs">2000</text>
<text x="647.5" y="149.8" text-anchor="middle" fill="#000" stroke="#000" stroke-width="0.15" textLength="24.0" lengthAdjust="spacingAndGlyphs">3000</text>
<text x="684.6" y="149.8" text-anchor="middle" fill="#000" stroke="#000" stroke-width="0.15" textLength="24.0" lengthAdjust="spacingAndGlyphs">4000</text>
<text x="721.4" y="149.8" text-anchor="middle" fill="#000" stroke="#000" stroke-width="0.15" textLength="24.0" lengthAdjust="spacingAndGlyphs">5000</text>
<text x="758.0" y="149.8" text-anchor="middle" fill="#000" stroke="#000" stroke-width="0.15" textLength="24.0" lengthAdjust="spacingAndGlyphs">6001</text>
<rect x="541" y="156" width="53" height="22" fill="#ffffff"/>
<polygon points="541,156 594,156 590,159 544,159" fill="url(#gTopB)"/>
<polygon points="541,156 544,159 544,174 541,178" fill="#e4e4e4"/>
<rect x="544" y="159" width="46" height="14.5" fill="#ffffff"/>
<text x="544.8" y="170.7" text-anchor="start" fill="#000" stroke="#000" stroke-width="0.15" textLength="6.5" lengthAdjust="spacingAndGlyphs">0</text>
<text x="602.5" y="170.0" text-anchor="start" fill="#000" stroke="#000" stroke-width="0.15" textLength="8.8" lengthAdjust="spacingAndGlyphs">to</text>
<rect x="638" y="156" width="53" height="22" fill="#ffffff"/>
<polygon points="638,156 691,156 687,159 641,159" fill="url(#gTopB)"/>
<polygon points="638,156 641,159 641,174 638,178" fill="#e4e4e4"/>
<rect x="641" y="159" width="46" height="14.5" fill="#ffffff"/>
<text x="641.8" y="170.7" text-anchor="start" fill="#000" stroke="#000" stroke-width="0.15" textLength="18.0" lengthAdjust="spacingAndGlyphs">591</text>
<clipPath id="clipG525"><rect x="540" y="169.5" width="4" height="13"/><rect x="544" y="173.6" width="110" height="9"/><rect x="525" y="174" width="15" height="9"/></clipPath>
<g clip-path="url(#clipG525)">
<text y="178.0" fill="#000" stroke="#000" stroke-width="0.15"><tspan x="531.2" textLength="12.8" lengthAdjust="spacingAndGlyphs">XY</tspan> <tspan x="546.1" textLength="29.9" lengthAdjust="spacingAndGlyphs">Graph</tspan> <tspan x="578.0" textLength="6.4" lengthAdjust="spacingAndGlyphs">2</tspan></text>
</g>
<ellipse cx="534.9" cy="165.8" rx="5.4" ry="11.9" fill="url(#gSpin)"/>
<line x1="529.9" y1="166" x2="539.9" y2="166" stroke="#dcdcdc" stroke-width="1"/>
<polygon points="532.6,163.7 537.1999999999999,163.7 534.9,159.6" fill="#b4b4b4" stroke="#505050" stroke-width="0.9"/>
<polygon points="532.6,168.5 537.1999999999999,168.5 534.9,172.6" fill="#b4b4b4" stroke="#505050" stroke-width="0.9"/>
<ellipse cx="631.6" cy="165.8" rx="5.4" ry="11.9" fill="url(#gSpin)"/>
<line x1="626.6" y1="166" x2="636.6" y2="166" stroke="#dcdcdc" stroke-width="1"/>
<polygon points="629.3000000000001,163.7 633.9,163.7 631.6,159.6" fill="#b4b4b4" stroke="#505050" stroke-width="0.9"/>
<polygon points="629.3000000000001,168.5 633.9,168.5 631.6,172.6" fill="#b4b4b4" stroke="#505050" stroke-width="0.9"/>
</g>
<rect x="329" y="162" width="94" height="21" fill="#ffffff"/>
<rect x="422" y="162" width="13" height="21" fill="url(#gEdge)"/>
<polygon points="422,162 434,162 423,164.8 422,164.8" fill="#ffffff" opacity="0.85"/>
<rect x="333" y="182" width="101.5" height="1" fill="#b4b4b4"/>
<rect x="333" y="181" width="101" height="1" fill="#f0f0f0" opacity="0.6"/>
<rect x="329" y="183" width="106" height="1" fill="#f6f6f6"/>
<text x="344.7" y="175.7" text-anchor="start" fill="#000" stroke="#000" stroke-width="0.15" textLength="27.5" lengthAdjust="spacingAndGlyphs">Plot 0</text>
<rect x="391" y="164" width="28" height="16" fill="#ffffff"/>
<path d="M391.5,180 L391.5,164.5 L419,164.5" fill="none" stroke="#848484" stroke-width="1"/>
<polyline points="392.5,176 403.5,166.8 413.5,175.6 418.2,172.2" fill="none" stroke="#000" stroke-width="1"/>
<rect x="854" y="162" width="94" height="21" fill="#ffffff"/>
<rect x="947" y="162" width="13" height="21" fill="url(#gEdge)"/>
<polygon points="947,162 959,162 948,164.8 947,164.8" fill="#ffffff" opacity="0.85"/>
<rect x="858" y="182" width="101.5" height="1" fill="#b4b4b4"/>
<rect x="858" y="181" width="101" height="1" fill="#f0f0f0" opacity="0.6"/>
<rect x="854" y="183" width="106" height="1" fill="#f6f6f6"/>
<text x="867.1" y="175.7" text-anchor="start" fill="#000" stroke="#000" stroke-width="0.15" textLength="27.5" lengthAdjust="spacingAndGlyphs">Plot 0</text>
<rect x="916" y="164" width="28" height="16" fill="#ffffff"/>
<path d="M916.5,180 L916.5,164.5 L944,164.5" fill="none" stroke="#848484" stroke-width="1"/>
<polyline points="917.5,176 928.5,166.8 938.5,175.6 943.2,172.2" fill="none" stroke="#000" stroke-width="1"/>
<rect x="238" y="162" width="90" height="24" fill="url(#gPal)"/>
<rect x="238" y="183" width="90" height="3" fill="url(#gPalB)"/>
<rect x="238" y="162" width="90" height="1" fill="#d8d8d8" opacity="0.8"/>
<rect x="238" y="162" width="13.5" height="20" fill="#ffffff" opacity="0.28"/>
<rect x="238" y="178" width="12" height="4" fill="#ffffff" opacity="0.3"/>
<rect x="253" y="166" width="19" height="16" fill="url(#gBtn)"/>
<path d="M253.5,181.5 L271.5,181.5 L271.5,166.5" fill="none" stroke="#8c8c8c" stroke-width="1"/>
<path d="M253.5,181.5 L253.5,166.5 L271.5,166.5" fill="none" stroke="#e0e0e0" stroke-width="1"/>
<rect x="273" y="166" width="20" height="16" fill="#6e6e6e"/>
<rect x="274" y="167" width="19" height="15" fill="#787878"/>
<rect x="295" y="166" width="19" height="16" fill="url(#gBtn)"/>
<path d="M295.5,181.5 L313.5,181.5 L313.5,166.5" fill="none" stroke="#8c8c8c" stroke-width="1"/>
<path d="M295.5,181.5 L295.5,166.5 L313.5,166.5" fill="none" stroke="#e0e0e0" stroke-width="1"/>
<rect x="255" y="169" width="3" height="3" fill="#2e7e2e"/>
<line x1="262.5" y1="168" x2="262.5" y2="181" stroke="#000" stroke-width="1.3"/>
<line x1="256" y1="174.5" x2="269" y2="174.5" stroke="#000" stroke-width="1.3"/>
<circle cx="262.5" cy="174.5" r="1.6" fill="#e8e8e8" stroke="#000" stroke-width="0.9"/>
<circle cx="277.4" cy="170.6" r="1.7" fill="#3cff3c"/>
<line x1="277.3" y1="180.3" x2="282.3" y2="176" stroke="#000" stroke-width="2.4"/>
<line x1="277.8" y1="179.9" x2="281.8" y2="176.4" stroke="#b8b8b8" stroke-width="0.8"/>
<circle cx="285.7" cy="172.6" r="3.9" fill="#f4f4ff" stroke="#000" stroke-width="1.2"/>
<path d="M283.5,172.6 L288,172.6 M285.7,170.4 L285.7,174.9" stroke="#000" stroke-width="1.1" fill="none"/>
<polygon points="284.8,178.6 290.2,178.6 287.5,181.3" fill="#000"/>
<rect x="297" y="169" width="3" height="3" fill="#2e7e2e"/>
<path d="M301.5,180.3 L298.2,175.6 Q297.7,174 299.3,174.1 L301.5,176.6 L301.5,170.4 Q302.5,168.9 303.5,170.4 L303.5,169.3 Q304.5,167.8 305.5,169.3 L305.5,170 Q306.5,168.5 307.6,170 L307.6,172 Q308.8,170.6 309.9,172 L309.9,176.6 L307.8,180.3" fill="#d4d4d4" stroke="#000" stroke-width="1" stroke-linejoin="round"/>
<path d="M303.5,170.4 V174.6 M305.5,169.3 V174.6 M307.6,170 V174.6" fill="none" stroke="#000" stroke-width="1"/>
<rect x="763" y="162" width="90" height="24" fill="url(#gPal)"/>
<rect x="763" y="183" width="90" height="3" fill="url(#gPalB)"/>
<rect x="763" y="162" width="90" height="1" fill="#d8d8d8" opacity="0.8"/>
<rect x="763" y="162" width="13.5" height="20" fill="#ffffff" opacity="0.28"/>
<rect x="763" y="178" width="12" height="4" fill="#ffffff" opacity="0.3"/>
<rect x="778" y="166" width="19" height="16" fill="url(#gBtn)"/>
<path d="M778.5,181.5 L796.5,181.5 L796.5,166.5" fill="none" stroke="#8c8c8c" stroke-width="1"/>
<path d="M778.5,181.5 L778.5,166.5 L796.5,166.5" fill="none" stroke="#e0e0e0" stroke-width="1"/>
<rect x="798" y="166" width="20" height="16" fill="#6e6e6e"/>
<rect x="799" y="167" width="19" height="15" fill="#787878"/>
<rect x="820" y="166" width="19" height="16" fill="url(#gBtn)"/>
<path d="M820.5,181.5 L838.5,181.5 L838.5,166.5" fill="none" stroke="#8c8c8c" stroke-width="1"/>
<path d="M820.5,181.5 L820.5,166.5 L838.5,166.5" fill="none" stroke="#e0e0e0" stroke-width="1"/>
<rect x="780" y="169" width="3" height="3" fill="#2e7e2e"/>
<line x1="787.5" y1="168" x2="787.5" y2="181" stroke="#000" stroke-width="1.3"/>
<line x1="781" y1="174.5" x2="794" y2="174.5" stroke="#000" stroke-width="1.3"/>
<circle cx="787.5" cy="174.5" r="1.6" fill="#e8e8e8" stroke="#000" stroke-width="0.9"/>
<circle cx="802.4" cy="170.6" r="1.7" fill="#3cff3c"/>
<line x1="802.3" y1="180.3" x2="807.3" y2="176" stroke="#000" stroke-width="2.4"/>
<line x1="802.8" y1="179.9" x2="806.8" y2="176.4" stroke="#b8b8b8" stroke-width="0.8"/>
<circle cx="810.7" cy="172.6" r="3.9" fill="#f4f4ff" stroke="#000" stroke-width="1.2"/>
<path d="M808.5,172.6 L813,172.6 M810.7,170.4 L810.7,174.9" stroke="#000" stroke-width="1.1" fill="none"/>
<polygon points="809.8,178.6 815.2,178.6 812.5,181.3" fill="#000"/>
<rect x="822" y="169" width="3" height="3" fill="#2e7e2e"/>
<path d="M826.5,180.3 L823.2,175.6 Q822.7,174 824.3,174.1 L826.5,176.6 L826.5,170.4 Q827.5,168.9 828.5,170.4 L828.5,169.3 Q829.5,167.8 830.5,169.3 L830.5,170 Q831.5,168.5 832.6,170 L832.6,172 Q833.8,170.6 834.9,172 L834.9,176.6 L832.8,180.3" fill="#d4d4d4" stroke="#000" stroke-width="1" stroke-linejoin="round"/>
<path d="M828.5,170.4 V174.6 M830.5,169.3 V174.6 M832.6,170 V174.6" fill="none" stroke="#000" stroke-width="1"/>
<rect x="274" y="134.5" width="12" height="11.5" fill="#ffffff"/>
<path d="M274.5,145.5 L274.5,135.0 L285.5,135.0" fill="none" stroke="#848484" stroke-width="1"/>
<path d="M275.5,144.5 L275.5,136.0 L284.5,136.0" fill="none" stroke="#404040" stroke-width="1"/>
<path d="M275.5,145.5 L285.5,145.5 L285.5,136.0" fill="none" stroke="#e6e2da" stroke-width="1"/>
<text y="144.4" fill="#000" stroke="#000" stroke-width="0.15"><tspan x="289.2" textLength="34.6" lengthAdjust="spacingAndGlyphs">Median</tspan> <tspan x="326.3" textLength="40.8" lengthAdjust="spacingAndGlyphs">filterwith</tspan> <tspan x="369.7" textLength="23.8" lengthAdjust="spacingAndGlyphs">rank</tspan></text>
<rect x="396" y="131" width="37.5" height="17.5" fill="#ffffff"/>
<path d="M396.5,148.0 L396.5,131.5 L433.0,131.5" fill="none" stroke="#848484" stroke-width="1"/>
<path d="M397.5,147.0 L397.5,132.5 L432.0,132.5" fill="none" stroke="#404040" stroke-width="1"/>
<path d="M397.5,148.0 L433.0,148.0 L433.0,132.5" fill="none" stroke="#d4d0c8" stroke-width="1"/>
<text x="399.0" y="144.5" text-anchor="start" fill="#000" stroke="#000" stroke-width="0.15" textLength="6.0" lengthAdjust="spacingAndGlyphs">3</text>
<text y="82.6" fill="#000" stroke="#000" stroke-width="0.15"><tspan x="820.2" textLength="38.6" lengthAdjust="spacingAndGlyphs">Window</tspan> <tspan x="861.1" textLength="19.5" lengthAdjust="spacingAndGlyphs">Size</tspan> <tspan x="883.2" textLength="26.3" lengthAdjust="spacingAndGlyphs">(data</tspan> <tspan x="911.8" textLength="34.3" lengthAdjust="spacingAndGlyphs">points)</tspan> <tspan x="948.1" textLength="15.1" lengthAdjust="spacingAndGlyphs">for</tspan></text>
<rect x="835" y="86" width="36" height="14" fill="#ffffff"/>
<path d="M835.5,100 L835.5,86.5 L871,86.5" fill="none" stroke="#848484" stroke-width="1"/>
<text x="837.0" y="98.0" text-anchor="start" fill="#000" stroke="#000" stroke-width="0.15" textLength="5.0" lengthAdjust="spacingAndGlyphs">1</text>
<rect x="798" y="117" width="12" height="11.5" fill="#ffffff"/>
<path d="M798.5,128.0 L798.5,117.5 L809.5,117.5" fill="none" stroke="#848484" stroke-width="1"/>
<path d="M799.5,127.0 L799.5,118.5 L808.5,118.5" fill="none" stroke="#404040" stroke-width="1"/>
<path d="M799.5,128.0 L809.5,128.0 L809.5,118.5" fill="none" stroke="#e6e2da" stroke-width="1"/>
<text y="128.0" fill="#000" stroke="#000" stroke-width="0.15"><tspan x="813.0" textLength="58.9" lengthAdjust="spacingAndGlyphs">Synchronize</tspan> <tspan x="874.4" textLength="17.8" lengthAdjust="spacingAndGlyphs">plot</tspan> <tspan x="894.9" textLength="21.6" lengthAdjust="spacingAndGlyphs">data</tspan> <tspan x="919.5" textLength="29.4" lengthAdjust="spacingAndGlyphs">range</tspan></text>
<rect x="798" y="139" width="12" height="11.5" fill="#ffffff"/>
<path d="M798.5,150.0 L798.5,139.5 L809.5,139.5" fill="none" stroke="#848484" stroke-width="1"/>
<path d="M799.5,149.0 L799.5,140.5 L808.5,140.5" fill="none" stroke="#404040" stroke-width="1"/>
<path d="M799.5,150.0 L809.5,150.0 L809.5,140.5" fill="none" stroke="#e6e2da" stroke-width="1"/>
<text y="149.4" fill="#000" stroke="#000" stroke-width="0.15"><tspan x="813.0" textLength="34.6" lengthAdjust="spacingAndGlyphs">Median</tspan> <tspan x="850.1" textLength="40.8" lengthAdjust="spacingAndGlyphs">filterwith</tspan> <tspan x="893.5" textLength="23.8" lengthAdjust="spacingAndGlyphs">rank</tspan></text>
<rect x="920" y="136" width="38" height="17.5" fill="#ffffff"/>
<path d="M920.5,153.0 L920.5,136.5 L957.5,136.5" fill="none" stroke="#848484" stroke-width="1"/>
<path d="M921.5,152.0 L921.5,137.5 L956.5,137.5" fill="none" stroke="#404040" stroke-width="1"/>
<path d="M921.5,153.0 L957.5,153.0 L957.5,137.5" fill="none" stroke="#d4d0c8" stroke-width="1"/>
<text x="923.0" y="149.5" text-anchor="start" fill="#000" stroke="#000" stroke-width="0.15" textLength="6.0" lengthAdjust="spacingAndGlyphs">3</text>
</svg>
</body>
</html>
